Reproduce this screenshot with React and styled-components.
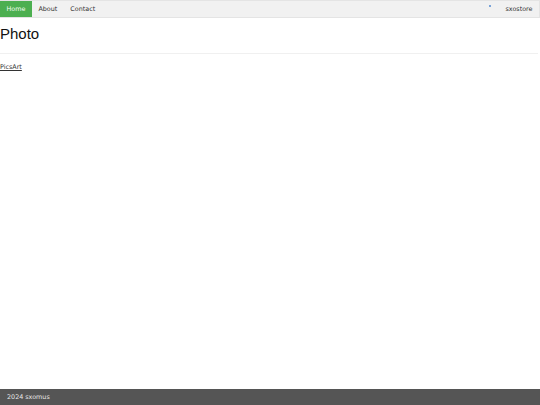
import React from "react";
import styled, { createGlobalStyle } from "styled-components";

const Global = createGlobalStyle`
  html, body { margin: 0; padding: 0; background: #fff; }
  body { font-family: "DejaVu Sans", Verdana, sans-serif; }
`;

const Page = styled.div`
  min-height: 100vh;
  display: flex;
  flex-direction: column;
`;

const Nav = styled.nav`
  display: flex;
  align-items: stretch;
  height: 16px;
  background: #f1f1f1;
  border: 1px solid #e4e4e4;
  border-left: none;
`;

const NavLink = styled.a`
  display: flex;
  align-items: center;
  padding: 0 6.5px;
  font-size: 6.4px;
  color: ${(p) => (p.$active ? "#f4fff4" : "#333")};
  background: ${(p) => (p.$active ? "#4caf50" : "transparent")};
  text-decoration: none;
`;

const Spacer = styled.div`
  flex: 1;
`;

const Dot = styled.span`
  display: flex;
  align-items: flex-start;
  padding-top: 4px;
  margin-right: 8px;
  &::before {
    content: "";
    width: 2px;
    height: 2px;
    background: #7aa3d8;
  }
`;

const Main = styled.main`
  flex: 1;
`;

const Title = styled.h1`
  margin: 7px 0 0 0;
  font-family: "Liberation Sans", Arial, sans-serif;
  font-weight: normal;
  font-size: 15px;
  line-height: 18px;
  color: #111;
`;

const Rule = styled.hr`
  margin: 10px 2px 0 0;
  border: none;
  border-top: 1px solid #f0f0f0;
`;

const Link = styled.a`
  display: inline-block;
  margin-top: 9px;
  font-size: 6.4px;
  color: #333;
  text-decoration: underline;
`;

const Footer = styled.footer`
  height: 16px;
  display: flex;
  align-items: center;
  padding-left: 7px;
  background: #555;
  color: #e6e6e6;
  font-size: 6.4px;
`;

export default function App() {
  return (
    <>
      <Global />
      <Page>
        <Nav>
          <NavLink $active href="#">Home</NavLink>
          <NavLink href="#">About</NavLink>
          <NavLink href="#">Contact</NavLink>
          <Spacer />
          <Dot />
          <NavLink href="#">sxostore</NavLink>
        </Nav>
        <Main>
          <Title>Photo</Title>
          <Rule />
          <Link href="#">PicsArt</Link>
        </Main>
        <Footer>2024 sxomus</Footer>
      </Page>
    </>
  );
}
